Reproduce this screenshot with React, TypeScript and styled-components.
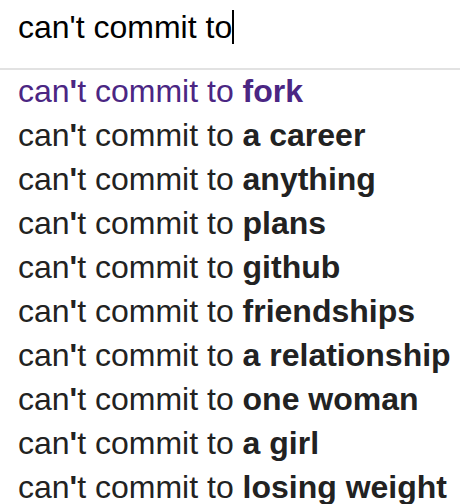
import React, { useState } from "react";
import styled, { createGlobalStyle } from "styled-components";

const GlobalStyle = createGlobalStyle`
  * { box-sizing: border-box; }
  html { scrollbar-width: none; }
  body {
    margin: 0;
    background: #fff;
    font-family: "Liberation Sans", Arial, Helvetica, sans-serif;
    font-size: 32px;
  }
`;

const SearchBox = styled.div`
  display: flex;
  align-items: center;
  padding: 10px 18px 24px;
  border-bottom: 2px solid #e2e2e2;
`;

const SearchInput = styled.input`
  field-sizing: content;
  min-width: 0;
  padding: 0;
  border: 0;
  outline: 0;
  background: transparent;
  color: #000;
  font: inherit;
  line-height: 34px;
  height: 34px;
`;

const Caret = styled.span`
  flex: none;
  width: 2px;
  height: 34px;
  background: #000;
`;

const Suggestions = styled.ul`
  display: flex;
  flex-direction: column;
  gap: 10px;
  margin: 0;
  padding: 4px 0 0;
  list-style: none;
`;

const SuggestionLink = styled.a<{ $visited?: boolean }>`
  display: block;
  padding-left: 18px;
  line-height: 34px;
  white-space: nowrap;
  text-decoration: none;
  color: ${(p) => (p.$visited ? "#4b2683" : "#222")};
`;

const items = [
  "fork",
  "a career",
  "anything",
  "plans",
  "github",
  "friendships",
  "a relationship",
  "one woman",
  "a girl",
  "losing weight",
];

export default function App() {
  const [query, setQuery] = useState("can't commit to");
  return (
    <>
      <GlobalStyle />
      <SearchBox>
        <SearchInput
          aria-label="Search"
          value={query}
          onChange={(e) => setQuery(e.target.value)}
        />
        <Caret />
      </SearchBox>
      <Suggestions>
        {items.map((item, i) => (
          <li key={item}>
            <SuggestionLink href="#" $visited={i === 0}>
              can<b>'</b>t commit to <b>{item}</b>
            </SuggestionLink>
          </li>
        ))}
      </Suggestions>
    </>
  );
}
